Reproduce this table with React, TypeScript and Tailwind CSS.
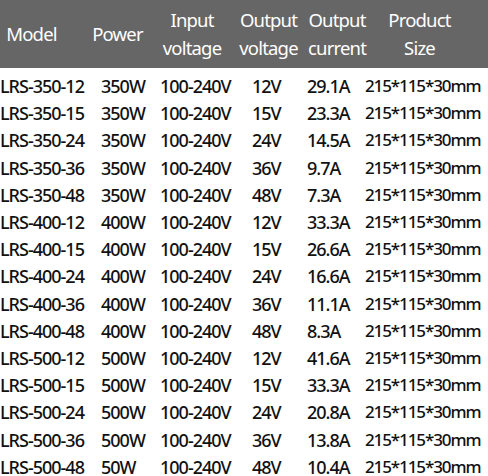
const ROWS: string[][] = [
  ["LRS-350-12", "350W", "100-240V", "12V", "29.1A", "215*115*30mm"],
  ["LRS-350-15", "350W", "100-240V", "15V", "23.3A", "215*115*30mm"],
  ["LRS-350-24", "350W", "100-240V", "24V", "14.5A", "215*115*30mm"],
  ["LRS-350-36", "350W", "100-240V", "36V", "9.7A", "215*115*30mm"],
  ["LRS-350-48", "350W", "100-240V", "48V", "7.3A", "215*115*30mm"],
  ["LRS-400-12", "400W", "100-240V", "12V", "33.3A", "215*115*30mm"],
  ["LRS-400-15", "400W", "100-240V", "15V", "26.6A", "215*115*30mm"],
  ["LRS-400-24", "400W", "100-240V", "24V", "16.6A", "215*115*30mm"],
  ["LRS-400-36", "400W", "100-240V", "36V", "11.1A", "215*115*30mm"],
  ["LRS-400-48", "400W", "100-240V", "48V", "8.3A", "215*115*30mm"],
  ["LRS-500-12", "500W", "100-240V", "12V", "41.6A", "215*115*30mm"],
  ["LRS-500-15", "500W", "100-240V", "15V", "33.3A", "215*115*30mm"],
  ["LRS-500-24", "500W", "100-240V", "24V", "20.8A", "215*115*30mm"],
  ["LRS-500-36", "500W", "100-240V", "36V", "13.8A", "215*115*30mm"],
  ["LRS-500-48", "50W", "100-240V", "48V", "10.4A", "215*115*30mm"],
]

const HEADERS: string[][] = [
  ["Model"],
  ["Power"],
  ["Input", "voltage"],
  ["Output", "voltage"],
  ["Output", "current"],
  ["Product", "Size"],
]

export default function App() {
  return (
    <div className="flex h-[476px] w-[488px] flex-col overflow-hidden bg-white font-['Noto_Sans','Open_Sans',sans-serif]">
      {/* Header: each label centred over its column */}
      <div className="grid h-[68px] shrink-0 grid-cols-[63px_109px_40px_113px_24px_141px] items-center bg-[#666666] text-[18.5px] leading-[28px] tracking-[-0.8px] text-white">
        {HEADERS.map((lines, i) => (
          <div key={i} className="flex flex-col items-center whitespace-nowrap">
            {lines.map((l) => (
              <span key={l}>{l}</span>
            ))}
          </div>
        ))}
      </div>

      {/* Rows fill the rest of the picture */}
      <div className="flex flex-1 flex-col">
        {ROWS.map((r) => (
          <div
            key={r.join()}
            className="grid flex-1 grid-cols-[101px_59px_92px_55px_58px_1fr] items-start whitespace-nowrap pt-[9px] text-[18px] leading-[18px] font-medium tracking-[-1px] text-[#111111]"
          >
            {r.slice(0, 5).map((c, i) => (
              <span key={i}>{c}</span>
            ))}
            <span className="text-[17px] tracking-[-1.1px]">{r[5]}</span>
          </div>
        ))}
      </div>
    </div>
  )
}
